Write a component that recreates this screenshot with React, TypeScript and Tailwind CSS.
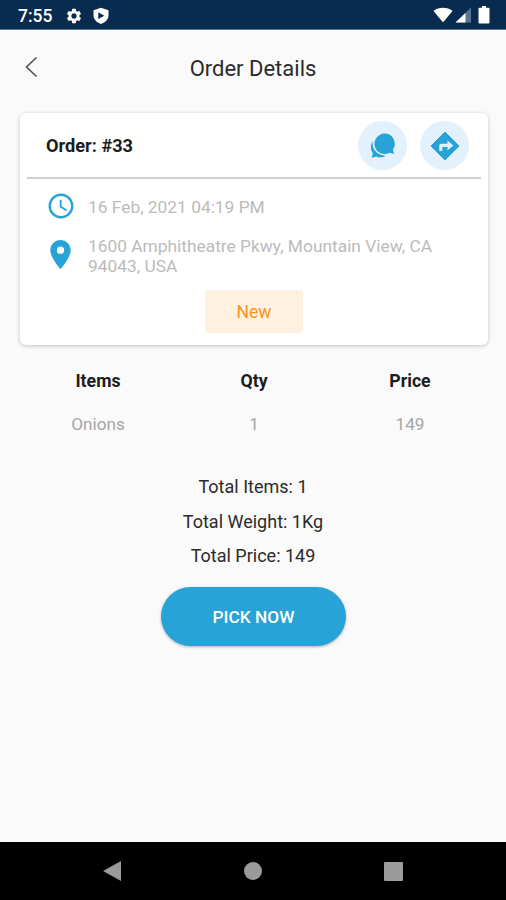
import { MdAccessTime, MdLocationOn, MdSettings } from 'react-icons/md';

const itens = [{ nome: 'Onions', qty: 1, price: 149 }];

const totais = [
    { label: 'Total Items', valor: '1' },
    { label: 'Total Weight', valor: '1Kg' },
    { label: 'Total Price', valor: '149' },
];

function StatusBar() {
    return (
        <div className="flex h-[30px] items-center justify-between border-b border-[#5b7290] bg-[#092b50] pl-[18px] pr-[16px] text-white">
            <div className="flex items-center pt-[2px]">
                <span className="w-[47px] text-[17.500px] font-medium leading-5">7:55</span>
                <MdSettings size={18} />
                <svg className="ml-[10px]" width="16" height="18" viewBox="0 0 16 18">
                    <path d="M8 0.800 15.500 3.300v5c0 4.200-3.200 7.200-7.500 8.700-4.300-1.500-7.500-4.500-7.500-8.700v-5z" fill="currentColor" />
                    <path d="M5.300 5.300v6.800l6-3.400z" fill="#092b50" />
                </svg>
            </div>
            <svg className="mt-px" width="57" height="18" viewBox="0 0 57 18">
                <path d="M0.500 5C3 2.800 6.500 1.800 10 1.800s7 1 9.500 3.200L11 15.300q-1 1-2 0z" fill="currentColor" />
                <path d="M38 1.500v15H22.500z" fill="#5b7290" />
                <path d="M32.500 7V16.500H22.500z" fill="currentColor" />
                <path d="M46.500 1.800h2.500V0h4v1.800h2.500q1 0 1 1V16.500q0 1-1 1H46.500q-1 0-1-1V2.800q0-1 1-1z" fill="currentColor" />
            </svg>
        </div>
    );
}

function ChatIcon() {
    return (
        <svg className="mr-[2px]" width="26" height="26" viewBox="0 0 26 26" fill="#28a3d7">
            <path d="M15.500 0.600a10.200 10.200 0 0 1 8.400 16l1.300 4.500-4.600-1.400A10.200 10.200 0 1 1 15.500 0.600z" />
            <path d="M3.600 8.200C2.600 15.500 7.800 22.300 16.600 22.700c-2.600 1.800-6.200 2-9.300 0.700L2.700 24.800l1.200-4.600C1.400 16.800 1.100 12 3.600 8.200z" />
        </svg>
    );
}

function DirectionsIcon() {
    return (
        <svg width="30" height="30" viewBox="0 0 30 30">
            <path d="M15 1 29 15 15 29 1 15z" fill="#28a3d7" stroke="#28a3d7" strokeLinejoin="round" />
            <path d="M9.300 20v-5.800q0-1.500 1.500-1.500h6.700V9.500l5.800 4.900-5.800 4.900V16h-5.200v4z" fill="#e3f1fd" />
        </svg>
    );
}

function OrderCard() {
    return (
        <div className="ml-[20px] mr-[18px] h-[232px] rounded-md bg-white px-[7px] shadow-[0_1px_4px_rgba(0,0,0,0.22)]">
            <div className="flex h-[66px] items-center justify-between border-b-2 border-[#cfcfcf] pl-[19px] pr-[12px]">
                <span className="pt-[2px] text-[18.200px] font-bold text-[#1c1c1c]">Order: #33</span>
                <div className="flex gap-[13px] pt-px">
                    <button className="flex size-[49px] items-center justify-center rounded-full bg-[#e3f1fd]">
                        <ChatIcon />
                    </button>
                    <button className="flex size-[49px] items-center justify-center rounded-full bg-[#e3f1fd]">
                        <DirectionsIcon />
                    </button>
                </div>
            </div>

            <div className="flex flex-col pl-[19px] text-[17.350px] leading-[20px] text-[#bbbbbb]">
                <div className="mt-[12px] flex h-[30px] items-center">
                    <MdAccessTime size={30} color="#28a3d7" />
                    <span className="ml-[12px] pt-px">16 Feb, 2021 04:19 PM</span>
                </div>
                <div className="mt-[15px] flex h-[40px] items-center">
                    <MdLocationOn className="-ml-[3px] -mt-[3px] shrink-0" size={35} color="#28a3d7" />
                    <span className="ml-[10px] w-[355px]">1600 Amphitheatre Pkwy, Mountain View, CA 94043, USA</span>
                </div>
            </div>

            <div className="mt-[14px] flex justify-center">
                <span className="flex h-[43px] w-[98px] items-center justify-center rounded-[4px] bg-[#fff1df] pt-[2px] text-[17.500px] text-[#fb9320]">
                    New
                </span>
            </div>
        </div>
    );
}

function App() {
    return (
        <div className="flex h-[900px] w-[506px] flex-col overflow-hidden bg-[#fafafa] font-['Roboto',sans-serif] text-[#2b2b2b]">
            <StatusBar />

            {/* Header */}
            <header className="grid h-[83px] grid-cols-[1fr_auto_1fr] items-start px-[25px] pt-[23px]">
                <svg className="mt-[3px]" width="13" height="22" viewBox="0 0 13 22">
                    <path d="M11.500 1.500 1.500 11 11.500 20.500" fill="none" stroke="#505050" strokeWidth="1.600" />
                </svg>
                <h1 className="pt-px text-[22px] leading-[30px]">Order Details</h1>
            </header>

            <OrderCard />

            {/* Items */}
            <div className="mt-[25px] flex flex-col gap-[21px] pl-[20px] pr-[18px] text-center text-[17.700px] leading-[22px]">
                <div className="grid grid-cols-3 font-bold text-[#1c1c1c]">
                    <span>Items</span>
                    <span>Qty</span>
                    <span>Price</span>
                </div>
                {itens.map((item) => (
                    <div key={item.nome} className="grid grid-cols-3 text-[17.200px] text-[#a6a6a6]">
                        <span>{item.nome}</span>
                        <span>{item.qty}</span>
                        <span>{item.price}</span>
                    </div>
                ))}
            </div>

            {/* Totals */}
            <div className="mt-[35px] flex flex-col items-center text-[18px] leading-[34.700px]">
                {totais.map((t) => (
                    <p key={t.label}>{t.label}: {t.valor}</p>
                ))}
            </div>

            <button className="mt-[13px] h-[59px] w-[185px] self-center rounded-full bg-[#28a3d7] pl-px pt-[2px] text-[17.300px] font-medium text-white shadow-[0_1px_3px_rgba(0,0,0,0.3)]">
                PICK NOW
            </button>

            {/* Android nav bar */}
            <nav className="mt-auto flex h-[58px] items-center justify-between bg-black pl-[103px] pr-[103px]">
                <svg width="18" height="20" viewBox="0 0 18 20">
                    <path d="M0 10 18 0v20z" fill="#9b9b9b" />
                </svg>
                <span className="size-[18px] rounded-full bg-[#9b9b9b]" />
                <span className="size-[19px] rounded-[1px] bg-[#9b9b9b]" />
            </nav>
        </div>
    );
}

export default App;
